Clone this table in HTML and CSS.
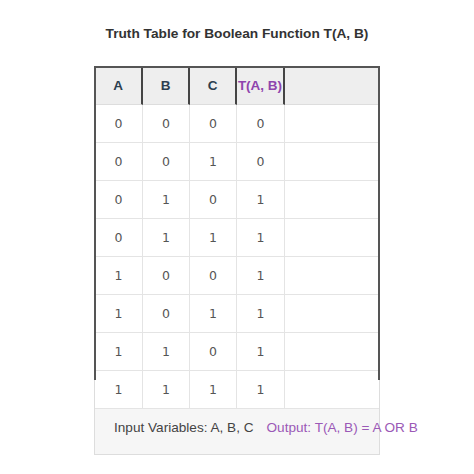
FILE: index.html
```html
<!DOCTYPE html>
<html>
<head>
<meta charset="utf-8">
<link rel="stylesheet" href="styles.css">
</head>
<body>
<h1 class="title">Truth Table for Boolean Function T(A, B)</h1>
<div class="table-wrap">
  <table class="truth">
    <colgroup>
      <col class="c1"><col class="c2"><col class="c3"><col class="c4"><col class="c5">
    </colgroup>
    <thead>
      <tr>
        <th>A</th><th>B</th><th>C</th><th class="out">T(A, B)</th><th class="blank"></th>
      </tr>
    </thead>
    <tbody>
      <tr><td>0</td><td>0</td><td>0</td><td>0</td><td></td></tr>
      <tr><td>0</td><td>0</td><td>1</td><td>0</td><td></td></tr>
      <tr><td>0</td><td>1</td><td>0</td><td>1</td><td></td></tr>
      <tr><td>0</td><td>1</td><td>1</td><td>1</td><td></td></tr>
      <tr><td>1</td><td>0</td><td>0</td><td>1</td><td></td></tr>
      <tr><td>1</td><td>0</td><td>1</td><td>1</td><td></td></tr>
      <tr><td>1</td><td>1</td><td>0</td><td>1</td><td></td></tr>
      <tr><td>1</td><td>1</td><td>1</td><td>1</td><td></td></tr>
    </tbody>
    <tfoot>
      <tr>
        <td colspan="5" class="legend"><span class="inputs">Input Variables: A, B, C</span><span class="output">Output: T(A, B) = A OR B</span></td>
      </tr>
    </tfoot>
  </table>
</div>
</body>
</html>
```
FILE: styles.css
```css
html, body {
  margin: 0;
  padding: 0;
  background: #ffffff;
}

body {
  font-family: "Liberation Sans", Arial, sans-serif;
  padding-top: 24px;
}

.title {
  margin: 0 0 22px 0;
  font-size: 13.7px;
  line-height: 20px;
  font-weight: bold;
  color: #333333;
  text-align: center;
}

.table-wrap {
  position: relative;
  width: 286px;
  margin: 0 auto;
}

.table-wrap::after {
  content: "";
  position: absolute;
  left: 0;
  top: 0;
  width: 100%;
  height: 314px;
  box-sizing: border-box;
  border: 2px solid #555555;
  border-bottom: none;
  pointer-events: none;
}

.truth {
  width: 286px;
  table-layout: fixed;
  border-collapse: separate;
  border-spacing: 0;
  border-left: 1px solid #dddddd;
  border-right: 1px solid #dddddd;
}

.c1 { width: 48px; }
.c2 { width: 47px; }
.c3 { width: 47px; }
.c4 { width: 48px; }
.c5 { width: 94px; }

.truth th {
  height: 39px;
  padding: 0;
  box-sizing: border-box;
  background: #eeeeee;
  border-right: 2px solid #444444;
  border-bottom: 1px solid #dddddd;
  font-size: 13.5px;
  font-weight: bold;
  color: #2c3e50;
  text-align: center;
  white-space: nowrap;
  overflow: visible;
}

.truth th.out {
  color: #8e44ad;
}

.truth th.blank {
  border-right: none;
}

.truth td {
  height: 38px;
  padding: 0;
  box-sizing: border-box;
  border-right: 1px solid #e4e4e4;
  border-bottom: 1px solid #e4e4e4;
  font-family: "DejaVu Sans", Verdana, sans-serif;
  font-size: 12.5px;
  color: #555555;
  text-align: center;
}

.truth td:last-child {
  border-right: none;
}

.truth td.legend {
  height: 46px;
  padding: 10px 0 0 19px;
  vertical-align: top;
  background: #f6f6f6;
  border-right: none;
  border-bottom: 1px solid #dddddd;
  font-family: "Liberation Sans", Arial, sans-serif;
  font-size: 13.6px;
  line-height: 18px;
  text-align: left;
  white-space: nowrap;
  overflow: visible;
}

.inputs {
  color: #444444;
}

.output {
  color: #9b59b6;
  margin-left: 13px;
}
```
